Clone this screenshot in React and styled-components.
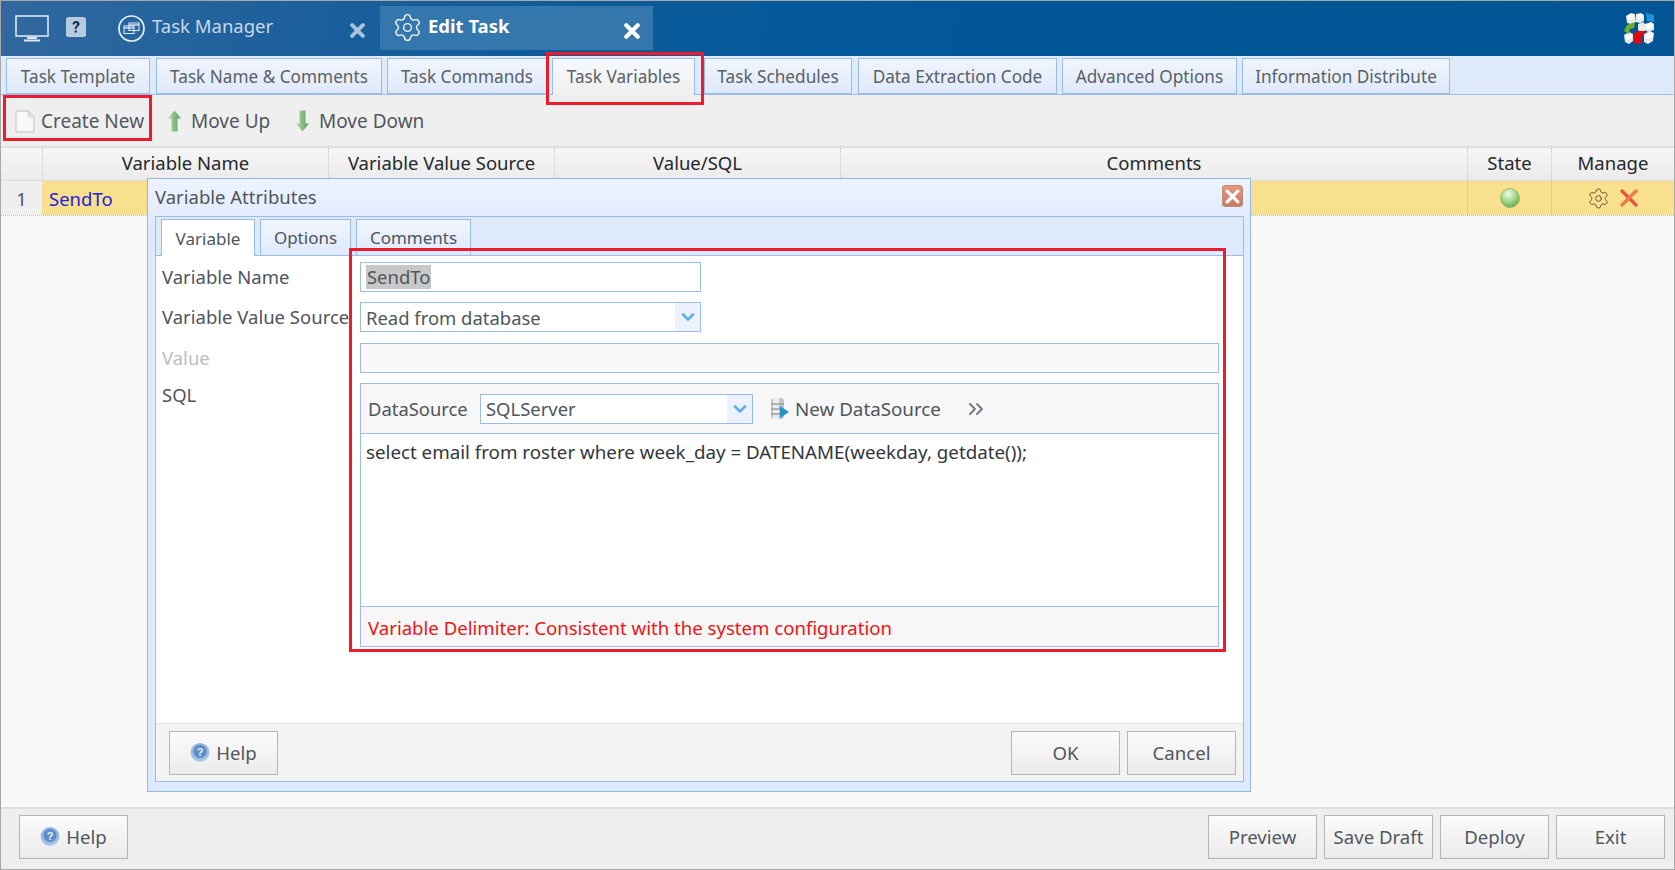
import React from "react";
import styled, { createGlobalStyle } from "styled-components";
import { ChevronDown, ChevronsRight, Settings } from "lucide-react";

const Global = createGlobalStyle`
  html, body { margin: 0; padding: 0; background: #f9f9f9; }
  * { box-sizing: border-box; }
`;
const Page = styled.div`
  position: relative; width: 1675px; height: 870px; overflow: hidden;
  display: flex; flex-direction: column; background: #f9f9f9;
  border: 1px solid #a8a8a8;
  font-family: "Noto Sans", "Open Sans", sans-serif; font-size: 18.5px; color: #50555c;
`;
const Header = styled.header`
  position: relative; height: 55px; flex: none;
  background: linear-gradient(100deg, #31689f 0%, #1a5f9b 20%, #02589a 50%, #015594 100%);
`;
const HeaderIcon = styled.span`
  position: absolute; left: ${p => p.$x}px; top: ${p => p.$y}px; display: flex;
`;
const HeaderTitle = styled.span`
  position: absolute; left: ${p => p.$x}px; top: 12px; line-height: 26px; font-size: 18.5px;
  font-weight: ${p => (p.$active ? 700 : 400)}; color: ${p => (p.$active ? "#fff" : "#c6d9ea")};
`;
const ActiveTab = styled.div`
  position: absolute; left: 379px; top: 5px; width: 273px; height: 44px; background: #3477ac;
`;
const HeaderClose = styled.span`
  position: absolute; left: ${p => p.$x}px; top: 22px; display: flex;
`;
const TabBar = styled.nav`
  height: 39px; flex: none; display: flex; align-items: flex-end; padding-left: 5px;
  background: #dee9fa; border-bottom: 1px solid #9bbce9;
`;
const Tab = styled.div`
  width: ${p => p.$w}px; margin-left: ${p => p.$gap}px; height: ${p => (p.$active ? 37 : 36)}px;
  margin-bottom: ${p => (p.$active ? -1 : 0)}px; padding-bottom: ${p => (p.$active ? 2 : 0)}px; position: relative;
  display: flex; align-items: center; justify-content: center; white-space: nowrap;
  border: 1px solid #9bbce9; border-bottom: ${p => (p.$active ? "none" : "1px solid #9bbce9")};
  background: ${p => (p.$active ? "linear-gradient(#f6f9fe, #efefef)" : "linear-gradient(#f1f6fe, #dee9fa)")};
  font-size: 17.2px; color: #5a5f66;
`;
const Toolbar = styled.div`
  height: 53px; flex: none; display: flex; align-items: center; background: #efefef;
  border-bottom: 2px solid #dfdfdf;
`;
const ToolItem = styled.div`
  position: absolute; left: ${p => p.$x}px; top: 96px; height: 48px; display: flex; align-items: center;
  font-size: 19px; color: #53585f; gap: ${p => p.$gap}px; white-space: nowrap;
`;
const GridHead = styled.div`
  height: 33px; flex: none; display: grid;
  grid-template-columns: 41px 286px 226px 286px 627px 84px 1fr;
  background: linear-gradient(#f6f6f6, #ebebeb); border-bottom: 1px solid #dcdcdc;
`;
const HeadCell = styled.div`
  display: flex; align-items: center; justify-content: center; color: #26282c; font-size: 18.5px;
  padding-bottom: 3px;
  border-left: ${p => (p.$first ? "none" : "1px dotted #c4c4c4")};
`;
const GridRow = styled.div`
  height: 35px; flex: none; display: grid;
  grid-template-columns: 41px 286px 226px 286px 627px 84px 1fr;
  border-bottom: 1px dotted #d2c48a;
`;
const RowCell = styled.div`
  display: flex; align-items: center; justify-content: ${p => (p.$left ? "flex-start" : "center")};
  padding-left: ${p => (p.$left ? 7 : 0)}px; gap: ${p => p.$gap || 0}px;
  background: ${p => (p.$index ? "#efefef" : "#f8e08e")}; color: ${p => (p.$link ? "#2222dd" : "#50555c")};
  font-size: 18.5px; border-left: ${p => (p.$dotted ? "1px dotted #cbbd85" : "none")};
`;
const Spacer = styled.div`
  flex: 1;
`;
const Footer = styled.footer`
  height: 62px; flex: none; display: flex; align-items: center; gap: 7px;
  padding: 0 9px 4px 18px; background: #eeeeee; border-top: 2px solid #dedede;
`;
const Button = styled.button`
  width: ${p => p.$w}px; height: 44px; padding: 0 0 2px; display: flex; align-items: center; justify-content: center; gap: 6px;
  margin-right: ${p => p.$mr || 0}px; flex: none;
  font-family: inherit; font-size: 18.6px; color: #52575e;
  border: 1px solid #b5b5b5; background: linear-gradient(#fbfbfb, #ebebeb);
`;
const Dialog = styled.section`
  position: absolute; left: 146px; top: 177px; width: 1104px; height: 614px;
  display: flex; flex-direction: column; padding: 0 6px 9px 7px;
  border: 1px solid #93b6e8; background: linear-gradient(#edf3ff, #deeafd 50px);
`;
const DialogTitle = styled.div`
  height: 37px; flex: none; display: flex; align-items: center; justify-content: space-between;
  font-size: 18.5px; color: #50555c; padding: 0 1px 3px 0;
`;
const CloseBox = styled.span`
  width: 21px; height: 22px; border-radius: 3px; background: linear-gradient(#e6967a, #c97c62);
  border: 1px solid #bd8a78; display: flex; align-items: center; justify-content: center;
`;
const Panel = styled.div`
  flex: 1; display: flex; flex-direction: column; border: 1px solid #9bbce9; min-height: 0;
`;
const PanelTabs = styled.div`
  height: 39px; flex: none; display: flex; align-items: flex-end; padding-left: 5px;
  background: #deeafc; border-bottom: 1px solid #9bbce9;
`;
const PanelTab = styled.div`
  width: ${p => p.$w}px; height: ${p => (p.$active ? 37 : 36)}px; margin-right: 5px;
  margin-bottom: ${p => (p.$active ? -1 : 0)}px; display: flex; align-items: center; justify-content: center;
  border: 1px solid #9bbce9; border-bottom: none; position: relative;
  background: ${p => (p.$active ? "#fff" : "linear-gradient(#f1f6fe, #deeafc)")};
  font-size: 17px; color: #50555c;
`;
const PanelBody = styled.div`
  flex: 1; background: #fff; padding: 6px 22px 0 6px; min-height: 0;
`;
const FormRow = styled.div`
  display: flex; margin-bottom: ${p => p.$mb ?? 10}px; height: ${p => p.$h || 30}px;
`;
const Label = styled.div`
  width: 198px; flex: none; font-size: 18.5px; line-height: ${p => p.$lh || 30}px; white-space: nowrap;
  color: ${p => (p.$muted ? "#bdbdbd" : "#50555c")};
`;
const Field = styled.div`
  width: ${p => p.$w}px; height: 30px; position: relative; display: flex; align-items: center;
  padding-left: 5px; border: 1px solid #9bbce9; background: ${p => (p.$disabled ? "#f9f9f9" : "#fff")};
  font-size: 18.45px; color: #50555c; flex: none;
`;
const Selected = styled.span`
  background: #c8c8c8; height: 24px; line-height: 24px; padding: 0 1px;
`;
const Arrow = styled.span`
  position: absolute; right: 0; top: 0; bottom: 0; width: 25px; background: #ebf2fe;
  display: flex; align-items: center; justify-content: center;
`;
const SqlBox = styled.div`
  width: 859px; height: 264px; border: 1px solid #9bbce9; display: flex; flex-direction: column; flex: none;
`;
const SqlBar = styled.div`
  height: 50px; flex: none; display: flex; align-items: center; padding-left: 7px;
  background: #f7f7f7; border-bottom: 1px solid #9bbce9; position: relative;
`;
const SqlLabel = styled.span`
  font-size: 18.4px; width: 112px; flex: none; color: #50555c;
`;
const SqlAction = styled.span`
  margin-left: 17px; display: flex; align-items: center; gap: 5px; font-size: 18.8px; color: #50555c;
`;
const SqlMore = styled.span`
  margin-left: 23px; display: flex;
`;
const SqlText = styled.div`
  flex: 1; padding: 6px 5px; font-size: 18.75px; line-height: 24px; color: #33363b; background: #fff; white-space: nowrap;
`;
const SqlNote = styled.div`
  height: 40px; flex: none; display: flex; align-items: center; padding: 1px 0 0 7px;
  background: #f7f7f7; border-top: 1px solid #9bbce9; color: #f01414; font-size: 18.6px;
`;
const DialogActions = styled.div`
  height: 58px; flex: none; display: flex; align-items: center; gap: 7px; padding: 1px 7px 0 13px;
  background: #f3f3f3; border-top: 1px solid #dedede;
`;
const Annotation = styled.div`
  position: absolute; left: ${p => p.$x}px; top: ${p => p.$y}px; width: ${p => p.$w}px; height: ${p => p.$h}px;
  border: 3.5px solid #ec1c2c; pointer-events: none;
`;

const Monitor = () => (
  <svg width="34" height="27" viewBox="0 0 34 27" fill="none">
    <rect x="1" y="1" width="32" height="20" stroke="#dce8f3" strokeWidth="1.6" />
    <rect x="12" y="22" width="10" height="2" fill="#dce8f3" />
    <rect x="9" y="24.5" width="16" height="2" fill="#dce8f3" />
  </svg>
);
const QuestionBox = () => (
  <svg width="20" height="20" viewBox="0 0 20 20">
    <rect width="20" height="20" rx="2.5" fill="#b4cbe0" />
    <path d="M6.5 7.2C6.7 5 8.2 4 10 4c2.1 0 3.5 1.2 3.5 3 0 2.600-3 2.500-3 5H8.700C8.700 9 11 9 11 7.200 11 6.400 10.600 5.900 9.900 5.900 9 5.900 8.600 6.500 8.500 7.500Z" fill="#1c2b44" />
    <rect x="8.700" y="13.300" width="2" height="2.300" fill="#1c2b44" />
  </svg>
);
const TaskManagerIcon = () => (
  <svg width="27" height="27" viewBox="0 0 27 27" fill="none" stroke="#e6eff7">
    <circle cx="13.500" cy="13.500" r="12.500" strokeWidth="1.700" />
    <rect x="11" y="8" width="10" height="7.500" strokeWidth="1" />
    <path d="M11 10h10" strokeWidth="1.300" />
    <rect x="6" y="11" width="10" height="7.500" strokeWidth="1" />
    <path d="M6 13h10" strokeWidth="1.300" />
  </svg>
);
const Logo = () => (
  <svg width="33" height="33" viewBox="0 0 33 33">
    <g fill="#e9e9e9">
      <path d="M3 4l5-3 4 1 1 8-5 2-4-1z" />
      <path d="M13 2l5-1 3 2 0 6-4 2-4-1z" />
      <path d="M15 12l5-2 2 2 0 7-4 1-3-2z" />
      <path d="M22 12l6-2 3 2 0 6-6 2-3-2z" />
      <path d="M1 23l5-3 4 2 0 7-4 3-4-2z" />
      <path d="M21 22l6-3 4 2-1 8-5 3-4-2z" />
    </g>
    <g fill="#ffffff">
      <path d="M4 4l4-2 3 1 0 3-4 2-3-1z" />
      <path d="M14 3l4-1 2 1 0 3-4 1-2-1z" />
      <path d="M23 13l5-2 2 1 0 3-5 2-2-1z" />
      <path d="M2 24l4-2 3 1 0 3-4 2-3-1z" />
      <path d="M22 23l5-2 3 1 0 3-5 2-3-1z" />
    </g>
    <path d="M23 1l8 2v7l-7-1z" fill="#1f93d8" />
    <path d="M1 19l3-6 8-3-1 6-4 1-1 5z" fill="#6fb02a" />
    <path d="M10 23l4-4 8 0-1 4-2 1 -1 8-7-1z" fill="#dd0c14" />
  </svg>
);
const XMark = ({ size, color, weight }) => (
  <svg width={size} height={size} viewBox="0 0 14 14">
    <path d="M2 2l10 10M12 2L2 12" stroke={color} strokeWidth={weight} strokeLinecap="round" />
  </svg>
);
const DocIcon = () => (
  <svg width="20" height="23" viewBox="0 0 20 23">
    <path d="M1 2.500Q1 1 2.500 1H13l6 6v13.500q0 1.500-1.500 1.500h-15Q1 22 1 20.500z" fill="#f8f8f8" stroke="#cfcfcf" strokeWidth="1.300" />
    <path d="M13 1v6h6z" fill="#e4e4e4" stroke="#cfcfcf" strokeWidth=".8" />
  </svg>
);
const GreenArrow = ({ down }) => (
  <svg width="15" height="22" viewBox="0 0 15 22" style={down ? { transform: "scaleY(-1)" } : undefined}>
    <defs>
      <linearGradient id={down ? "ga-d" : "ga-u"} x1="0" x2="1" y1="0" y2="0">
        <stop offset="0" stopColor="#b9dcb0" />
        <stop offset="1" stopColor="#4f9c55" />
      </linearGradient>
    </defs>
    <path d="M7.500 0.500L14 8.500H10.500V21.500H4.500V8.500H1z" fill={`url(#${down ? "ga-d" : "ga-u"})`} />
  </svg>
);
const HelpIcon = () => (
  <svg width="20" height="21" viewBox="0 0 20 21">
    <defs>
      <radialGradient id="help-grad" cx=".5" cy=".4" r=".6">
        <stop offset="0" stopColor="#5e8fca" />
        <stop offset="1" stopColor="#b5cfe9" />
      </radialGradient>
    </defs>
    <circle cx="10" cy="10.500" r="9.500" fill="url(#help-grad)" />
    <circle cx="10" cy="9.500" r="6.500" fill="#5b8ec8" />
    <text x="10" y="14" textAnchor="middle" fontSize="11" fontWeight="700" fontFamily="Liberation Sans" fill="#e8f1fa">?</text>
  </svg>
);
const Ball = () => (
  <svg width="20" height="20" viewBox="0 0 20 20">
    <defs>
      <radialGradient id="ball" cx=".42" cy=".3" r=".75">
        <stop offset="0" stopColor="#f2f9ec" />
        <stop offset=".5" stopColor="#a7d88c" />
        <stop offset="1" stopColor="#5da642" />
      </radialGradient>
    </defs>
    <circle cx="10" cy="10" r="9.500" fill="url(#ball)" stroke="#8bb56a" strokeWidth=".7" />
  </svg>
);
const DeleteMark = () => (
  <svg width="20" height="20" viewBox="0 0 20 20">
    <path d="M3 3L17 17" stroke="#e8553a" strokeWidth="3.400" strokeLinecap="round" />
    <path d="M17 3L3 17" stroke="#ef7b4b" strokeWidth="3.400" strokeLinecap="round" />
  </svg>
);
const DbIcon = () => (
  <svg width="20" height="23" viewBox="0 0 20 23">
    <rect x="1" y="1" width="13" height="21" rx="3" fill="#c4c4c4" />
    <rect x="3" y="1" width="6" height="21" fill="#ececec" />
    <path d="M1 7h13M1 12h13M1 17h13" stroke="#9a9a9a" strokeWidth="1.400" />
    <path d="M10 9l9 6-9 6z" fill="#2a93c9" />
  </svg>
);

const DropArrow = () => (
  <Arrow><ChevronDown size={20} color="#62b0ea" strokeWidth={3.200} /></Arrow>
);

const topTabs = [
  ["Task Template", 144, 0], ["Task Name & Comments", 226, 6], ["Task Commands", 160, 5],
  ["Task Variables", 143, 5, true], ["Task Schedules", 148, 9], ["Data Extraction Code", 199, 6],
  ["Advanced Options", 175, 5], ["Information Distribute", 208, 5],
];
const heads = ["", "Variable Name", "Variable Value Source", "Value/SQL", "Comments", "State", "Manage"];

export default function App() {
  return (
    <Page>
      <Global />
      <Header>
        <HeaderIcon $x={14} $y={14}><Monitor /></HeaderIcon>
        <HeaderIcon $x={65} $y={16}><QuestionBox /></HeaderIcon>
        <HeaderIcon $x={117} $y={14}><TaskManagerIcon /></HeaderIcon>
        <HeaderTitle $x={151}>Task Manager</HeaderTitle>
        <HeaderClose $x={349}><XMark size={15} color="#a9c4dc" weight={3.600} /></HeaderClose>
        <ActiveTab />
        <HeaderIcon $x={391} $y={11}><Settings size={31} color="#eef4fa" strokeWidth={1.100} /></HeaderIcon>
        <HeaderTitle $x={427} $active>Edit Task</HeaderTitle>
        <HeaderClose $x={623}><XMark size={16} color="#ffffff" weight={3.600} /></HeaderClose>
        <HeaderIcon $x={1622} $y={11}><Logo /></HeaderIcon>
      </Header>
      <TabBar>
        {topTabs.map(([t, w, g, a]) => <Tab key={t} $w={w} $gap={g} $active={a}>{t}</Tab>)}
      </TabBar>
      <Toolbar />
      <ToolItem $x={14} $gap={6}><DocIcon />Create New</ToolItem>
      <ToolItem $x={166} $gap={9}><GreenArrow />Move Up</ToolItem>
      <ToolItem $x={294} $gap={9}><GreenArrow down />Move Down</ToolItem>
      <GridHead>
        {heads.map((h, i) => <HeadCell key={i} $first={i === 0}>{h}</HeadCell>)}
      </GridHead>
      <GridRow>
        <RowCell $index>1</RowCell>
        <RowCell $left $link>SendTo</RowCell>
        <RowCell />
        <RowCell />
        <RowCell />
        <RowCell $dotted><Ball /></RowCell>
        <RowCell $dotted $gap={9}><Settings size={23} color="#5a5430" strokeWidth={1} /><DeleteMark /></RowCell>
      </GridRow>
      <Spacer />
      <Footer>
        <Button $w={109} $mr={1073}><HelpIcon />Help</Button>
        <Button $w={109}>Preview</Button>
        <Button $w={109}>Save Draft</Button>
        <Button $w={109}>Deploy</Button>
        <Button $w={109}>Exit</Button>
      </Footer>

      <Dialog>
        <DialogTitle>
          Variable Attributes
          <CloseBox><XMark size={15} color="#ffffff" weight={3} /></CloseBox>
        </DialogTitle>
        <Panel>
          <PanelTabs>
            <PanelTab $w={94} $active>Variable</PanelTab>
            <PanelTab $w={91}>Options</PanelTab>
            <PanelTab $w={115}>Comments</PanelTab>
          </PanelTabs>
          <PanelBody>
            <FormRow>
              <Label>Variable Name</Label>
              <Field $w={341}><Selected>SendTo</Selected></Field>
            </FormRow>
            <FormRow $mb={11}>
              <Label>Variable Value Source</Label>
              <Field $w={341}>Read from database<DropArrow /></Field>
            </FormRow>
            <FormRow>
              <Label $muted>Value</Label>
              <Field $w={859} $disabled />
            </FormRow>
            <FormRow $h={264}>
              <Label $lh={24}>SQL</Label>
              <SqlBox>
                <SqlBar>
                  <SqlLabel>DataSource</SqlLabel>
                  <Field $w={273}>SQLServer<DropArrow /></Field>
                  <SqlAction><DbIcon />New DataSource</SqlAction>
                  <SqlMore><ChevronsRight size={24} color="#6d7680" strokeWidth={1.800} /></SqlMore>
                </SqlBar>
                <SqlText>select email from roster where week_day = DATENAME(weekday, getdate());</SqlText>
                <SqlNote>Variable Delimiter: Consistent with the system configuration</SqlNote>
              </SqlBox>
            </FormRow>
          </PanelBody>
          <DialogActions>
            <Button $w={109} $mr={726}><HelpIcon />Help</Button>
            <Button $w={109}>OK</Button>
            <Button $w={109}>Cancel</Button>
          </DialogActions>
        </Panel>
      </Dialog>

      <Annotation $x={2} $y={94} $w={149} $h={46} />
      <Annotation $x={545} $y={51} $w={158} $h={53} />
      <Annotation $x={348} $y={247} $w={877} $h={404} />
    </Page>
  );
}
